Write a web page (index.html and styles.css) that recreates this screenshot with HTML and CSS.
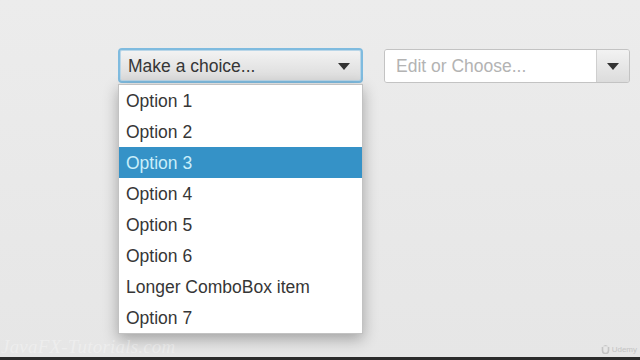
FILE: index.html
```html
<!DOCTYPE html>
<html>
<head>
<meta charset="utf-8">
<link rel="stylesheet" href="styles.css">
</head>
<body>
<div class="screen">
  <div class="stage">
    <div class="combo-wrap">
      <div class="combo">
        <span class="combo-text">Make a choice...</span>
        <svg class="arrow" width="12" height="7" viewBox="0 0 12 7"><path d="M0 0H12L6 7Z" fill="#333"/></svg>
      </div>
      <ul class="popup">
        <li>Option 1</li>
        <li>Option 2</li>
        <li class="selected">Option 3</li>
        <li>Option 4</li>
        <li>Option 5</li>
        <li>Option 6</li>
        <li>Longer ComboBox item</li>
        <li>Option 7</li>
      </ul>
    </div>
    <div class="editable">
      <div class="field">Edit or Choose...</div>
      <div class="btn">
        <svg class="arrow" width="12" height="7" viewBox="0 0 12 7"><path d="M0 0H12L6 7Z" fill="#333"/></svg>
      </div>
    </div>
  </div>
  <div class="bar"></div>
  <div class="watermark">JavaFX-Tutorials.com</div>
  <div class="udemy">
    <svg width="9" height="9" viewBox="0 0 9 9"><path d="M1.5 2V5.5a3 3 0 0 0 6 0V2" fill="none" stroke="#c4c4c4" stroke-width="1.6"/><path d="M4.5 0L7.5 1.2H1.5Z" fill="#c4c4c4"/></svg>
    <span>Udemy</span>
  </div>
</div>
</body>
</html>
```
FILE: styles.css
```css
html, body {
  margin: 0;
  padding: 0;
}
body {
  width: 640px;
  height: 360px;
  overflow: hidden;
  background: #e8e8e8;
  font-family: "Liberation Sans", Arial, sans-serif;
}
.screen {
  position: relative;
  width: 640px;
  height: 360px;
  display: flex;
  flex-direction: column;
  background: linear-gradient(#ececec, #e6e6e6);
}
.stage {
  flex: 1;
  display: flex;
  align-items: flex-start;
  gap: 21px;
  padding: 48px 0 0 118px;
}
.combo-wrap {
  position: relative;
  width: 245px;
}
.combo {
  box-sizing: border-box;
  height: 35px;
  border: 2px solid #7fbbdf;
  border-radius: 4px;
  background: linear-gradient(#f3f3f3, #dadada);
  display: flex;
  align-items: center;
  padding: 1px 11px 0 8px;
  box-shadow: inset 0 0 0 1px #b9d6e8;
}
.combo-text {
  flex: 1;
  font-size: 17.5px;
  color: #363636;
}
.arrow {
  display: block;
}
.popup {
  position: absolute;
  top: 36px;
  left: 0;
  box-sizing: border-box;
  width: 245px;
  margin: 0;
  padding: 0;
  list-style: none;
  background: #fff;
  border: 1px solid #c2c2c2;
  box-shadow: 0 5px 14px rgba(0, 0, 0, 0.3);
}
.popup li {
  height: 31px;
  line-height: 32px;
  padding-left: 7px;
  font-size: 17.5px;
  color: #363636;
  white-space: nowrap;
}
.popup li.selected {
  background: #3592c7;
  color: #c9eefa;
}
.editable {
  box-sizing: border-box;
  width: 246px;
  height: 34px;
  margin-top: 1px;
  display: flex;
  border: 1px solid #c3c3c3;
  border-radius: 3px;
  overflow: hidden;
}
.field {
  flex: 1;
  background: #fff;
  display: flex;
  align-items: center;
  padding: 1px 0 0 11px;
  font-size: 17.5px;
  color: #b3b3b3;
}
.btn {
  width: 32px;
  border-left: 1px solid #cfcfcf;
  background: linear-gradient(#f2f2f2, #dcdcdc);
  display: flex;
  align-items: center;
  justify-content: center;
}
.bar {
  height: 3px;
  background: #2b2b2b;
}
.watermark {
  position: absolute;
  left: 1px;
  bottom: 2px;
  font-family: "Liberation Serif", "Times New Roman", serif;
  font-style: italic;
  font-size: 19px;
  color: rgba(255, 255, 255, 0.3);
  letter-spacing: 0.2px;
}
.udemy {
  position: absolute;
  right: 3px;
  bottom: 6px;
  display: flex;
  align-items: center;
  gap: 2px;
  font-size: 8px;
  color: #c4c4c4;
}
```
